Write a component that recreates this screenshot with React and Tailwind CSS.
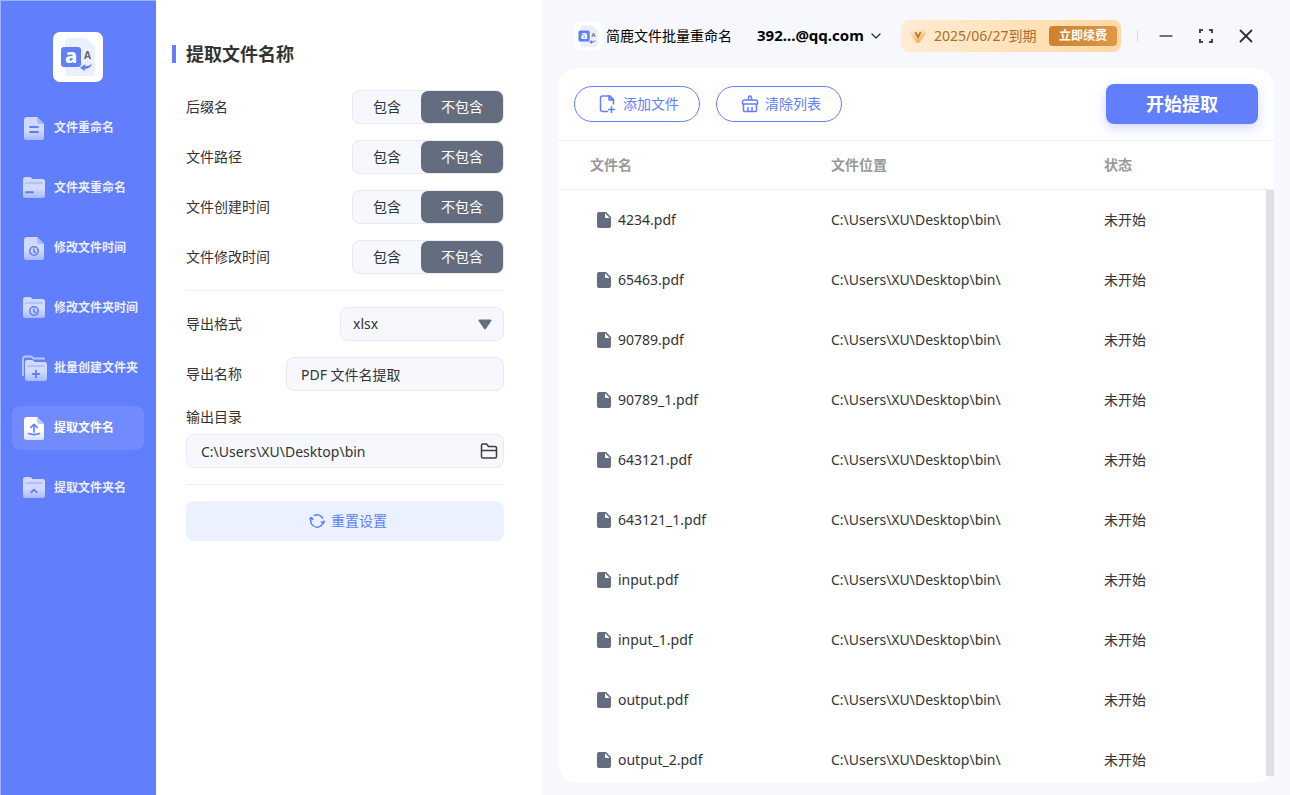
import React, { useState } from 'react';
import { ChevronDown, Minus, X } from 'lucide-react';

const FILES = [
  '4234.pdf', '65463.pdf', '90789.pdf', '90789_1.pdf', '643121.pdf',
  '643121_1.pdf', 'input.pdf', 'input_1.pdf', 'output.pdf', 'output_2.pdf',
];

const NAV = [
  { label: '文件重命名', shape: 'file', mark: 'lines' },
  { label: '文件夹重命名', shape: 'folder', mark: 'dash' },
  { label: '修改文件时间', shape: 'file', mark: 'clock' },
  { label: '修改文件夹时间', shape: 'folder', mark: 'clock' },
  { label: '批量创建文件夹', shape: 'folders', mark: 'plus' },
  { label: '提取文件名', shape: 'file', mark: 'upload' },
  { label: '提取文件夹名', shape: 'folder', mark: 'caret' },
];

const OPTIONS = ['后缀名', '文件路径', '文件创建时间', '文件修改时间'];

const MARKS = {
  lines: <path d="M8 12h8M8 17h8" />,
  dash: <path d="M4 17.3h7" />,
  clock: <g strokeWidth="1.6"><circle cx="12" cy="16" r="4.2" /><path d="M11.8 14v2.4l1.7 1.2" /></g>,
  plus: <path d="M12 12.8v6.4M8.8 16h6.4" />,
  upload: <g strokeWidth="1.6"><path d="M12 17V9.6M8.8 12.4 12 9.3l3.2 3.1M6.5 18.6c3.5 1.3 7.5 1.3 11 0" /></g>,
  caret: <path d="m9.4 17 2.6-2.4 2.6 2.4" />,
};

const FOLDER = 'M1 4.5A2.5 2.5 0 0 1 3.5 2h4.2c.8 0 1.4.3 2 .9l.9 1.1H20.500A2.5 2.5 0 0 1 23 6.500V20.500A2.5 2.5 0 0 1 20.500 23H3.500A2.5 2.5 0 0 1 1 20.500Z';

// Icono del menú lateral: archivo o carpeta con una marca encima
function NavIcon({ shape, mark, active }) {
  const id = `g-${shape}-${mark}`;
  return (
    <svg width="26" height="26" viewBox="0 0 26 26" fill="none" className="shrink-0">
      <defs>
        <linearGradient id={id} x1="0" y1="0" x2="0" y2="1">
          <stop offset="0" stopColor={active ? '#ffffff' : '#cfd8ff'} />
          <stop offset="0.55" stopColor={active ? '#ffffff' : '#d3dbff'} />
          <stop offset="1" stopColor={active ? '#d6deff' : '#a9b9fe'} />
        </linearGradient>
      </defs>
      {shape === 'folders' && (
        <path d="M1 21V4a2.5 2.5 0 0 1 2.5-2.5H9.500l2 2H23" stroke="#bcc8ff" strokeWidth="1.8" />
      )}
      <g transform={shape === 'folders' ? 'translate(2 3)' : undefined}>
        {shape === 'file' ? (
          <>
            <path d="M5 2H15l7 7V22.500A2.5 2.5 0 0 1 19.500 25H4.500A2.5 2.5 0 0 1 2 22.500V5a3 3 0 0 1 3-3Z" fill={`url(#${id})`} />
            <path d="M15 2l7 7H17.500A2.5 2.5 0 0 1 15 6.500Z" fill={active ? '#bcc9ff' : '#a9b9fe'} />
          </>
        ) : (
          <>
            <path d={FOLDER} fill={`url(#${id})`} />
            <path d="M3 9.5c0-1.500.8-2.500 2-2.500H19c1.200 0 2 1 2 2.500-.5-.5-1-.6-2-.6H5c-1 0-1.500.1-2 .6Z" fill="#b3c1ff" />
          </>
        )}
        <g stroke="#617efc" strokeWidth="1.9" strokeLinecap="round" strokeLinejoin="round">{MARKS[mark]}</g>
      </g>
    </svg>
  );
}

function Logo({ className }) {
  return (
    <svg viewBox="0 0 50 50" className={className}>
      <rect width="50" height="50" rx="7" fill="#fff" />
      <path d="M16 6H33l9 9V40a4 4 0 0 1-4 4H16a4 4 0 0 1-4-4V10a4 4 0 0 1 4-4Z" fill="#ebf0ff" />
      <rect x="8" y="15" width="20" height="20" rx="3" fill="#617efc" />
      <text x="18" y="31" textAnchor="middle" fontSize="20" fontWeight="800" fill="#fff">a</text>
      <text x="34.5" y="27" textAnchor="middle" fontSize="10" fontWeight="700" fill="#5c6475">A</text>
      <path d="M39 31.5c-2 2.2-4 2.8-7 2.700l.5-2.200-5.500 3.700 4.600 3.400.2-2.200c4 0 6.400-2 7.200-5.400Z" fill="#617efc" />
    </svg>
  );
}

function FileIcon() {
  return (
    <svg width="14" height="16" viewBox="0 0 14 16" className="shrink-0">
      <path d="M2 0H9L14 5V14a2 2 0 0 1-2 2H2a2 2 0 0 1-2-2V2a2 2 0 0 1 2-2Z" fill="#646d80" />
      <path d="M8 1.300 12.700 6H9a1 1 0 0 1-1-1Z" fill="#fff" />
    </svg>
  );
}

function AddFileIcon() {
  return (
    <svg width="18" height="18" viewBox="0 0 18 18" fill="none" stroke="#617efc" strokeWidth="1.5" strokeLinecap="round" strokeLinejoin="round">
      <path d="M8.500 16.500H3.500A2 2 0 0 1 1.500 14.500V3A2 2 0 0 1 3.500 1h7.500L14.500 4.500V9" />
      <path d="M10 1V5H14.500Z" fill="#617efc" fillOpacity="0.4" />
      <path d="M12.500 11.500v6M9.500 14.500h6" />
    </svg>
  );
}

function CleanIcon() {
  return (
    <svg width="18" height="18" viewBox="0 0 18 18" fill="none" stroke="#617efc" strokeWidth="1.5" strokeLinejoin="round">
      <path d="M7.500 4.500V2.500a1.500 1.500 0 0 1 3 0V4.500M1.500 9V7a2 2 0 0 1 2-2H14.500a2 2 0 0 1 2 2V9ZM2.500 9V15.500a1 1 0 0 0 1 1H14.500a1 1 0 0 0 1-1V9" />
      <path d="M7 12V16.500M11 12V16.500" />
    </svg>
  );
}

function ResetIcon() {
  return (
    <svg width="16" height="16" viewBox="0 0 18 18" fill="none" stroke="#617efc" strokeWidth="1.7" strokeLinecap="round" strokeLinejoin="round">
      <path d="M2.600 5.500A7 7 0 0 0 5.800 15M7.800 15.900A7 7 0 0 0 16 9.500M15.300 6A7 7 0 0 0 6 2.700" />
      <path d="M1 6.500 2.800 5 4.300 7M14 9.800 16 11.800 17.300 9.300" />
    </svg>
  );
}

function FolderIcon() {
  return (
    <svg width="18" height="18" viewBox="0 0 18 18" fill="none" stroke="#3d3d3d" strokeWidth="1.5" strokeLinejoin="round">
      <path d="M1.500 14.500V3.500a1.500 1.500 0 0 1 1.500-1.500H6.500L8.500 4.500H15A1.500 1.500 0 0 1 16.500 6V14.500A1.500 1.500 0 0 1 15 16H3A1.500 1.500 0 0 1 1.500 14.500ZM1.500 8.500h15" />
    </svg>
  );
}

function VipIcon() {
  return (
    <svg width="18" height="16" viewBox="0 0 18 16" className="shrink-0">
      <defs>
        <linearGradient id="vip" x1="0" y1="0" x2="0.3" y2="1">
          <stop offset="0" stopColor="#fff1dc" />
          <stop offset="0.5" stopColor="#fbd49a" />
          <stop offset="1" stopColor="#f2ae56" />
        </linearGradient>
      </defs>
      <path d="M4.500.8h9c.6 0 1 .2 1.400.7l2 3c.5.7.4 1.400-.1 2l-6.600 8c-.7.8-1.700.8-2.400 0l-6.600-8c-.5-.6-.6-1.300-.1-2l2-3c.4-.5.800-.7 1.400-.7Z" fill="url(#vip)" />
      <path d="M5.500 4.300h2L9 7.600l1.500-3.300h2L9 10.800Z" fill="#a8743a" />
    </svg>
  );
}

function Toggle({ label, value, onChange }) {
  const base = 'h-8 text-sm leading-5 rounded-[7px]';
  const on = 'bg-[#646d80] text-white';
  const off = 'text-[#333333]';
  return (
    <div className="flex items-center justify-between">
      <span className="text-sm leading-5">{label}</span>
      <div role="group" aria-label={label} className="flex w-[152px] rounded-lg border border-[#e8eaf0] bg-[#f6f8fd]">
        <button type="button" aria-pressed={value} onClick={() => onChange(true)} className={`${base} flex-1 ${value ? on : off}`}>包含</button>
        <button type="button" aria-pressed={!value} onClick={() => onChange(false)} className={`${base} w-[82px] ${value ? off : on}`}>不包含</button>
      </div>
    </div>
  );
}

const App = () => {
  const [activo, setActivo] = useState(5);
  const [incluye, setIncluye] = useState([false, false, false, false]);
  const [nombre, setNombre] = useState('PDF 文件名提取');
  const [formato, setFormato] = useState('xlsx');
  const [ruta, setRuta] = useState('C:\\Users\\XU\\Desktop\\bin');

  const reset = () => {
    setIncluye([false, false, false, false]);
    setFormato('xlsx');
  };

  return (
    <div className="flex h-screen bg-[#f6f8fd] text-[#333333] font-['Noto_Sans','Noto_Sans_CJK_SC',sans-serif]">
      {/* Menú lateral */}
      <aside className="w-[156px] shrink-0 bg-[#617efc] border-l border-t border-[#a0b1fd] pt-[31px] pl-[11px] pr-3">
        <Logo className="w-[50px] h-[50px] mx-auto" />
        <nav className="mt-6 flex flex-col gap-4">
          {NAV.map((n, i) => (
            <button
              key={n.label}
              type="button"
              onClick={() => setActivo(i)}
              className={`h-11 flex items-center gap-1.5 pl-2.5 rounded-lg text-xs font-bold whitespace-nowrap ${i === activo ? 'bg-[#718bfd] text-white' : 'text-[#eaeeff]'}`}
            >
              <NavIcon shape={n.shape} mark={n.mark} active={i === activo} />
              {n.label}
            </button>
          ))}
        </nav>
      </aside>

      {/* Opciones de extracción */}
      <section className="w-[386px] shrink-0 bg-white pt-10 pl-4 pr-[38px]">
        <h1 className="flex items-center gap-2.5 text-lg leading-7 font-bold">
          <span className="w-1 h-[18px] bg-[#617efc]" />
          提取文件名称
        </h1>
        <div className="ml-3.5 mt-[22px] flex flex-col gap-4">
          {OPTIONS.map((o, i) => (
            <Toggle key={o} label={o} value={incluye[i]} onChange={(v) => setIncluye(incluye.map((x, j) => (j === i ? v : x)))} />
          ))}
          <hr className="border-[#eeeff2]" />
          <div className="flex items-center justify-between">
            <label htmlFor="formato" className="text-sm leading-5">导出格式</label>
            <div className="grid w-[164px]">
              <select id="formato" value={formato} onChange={(e) => setFormato(e.target.value)} className="col-start-1 row-start-1 appearance-none h-[34px] pl-3 rounded-lg border border-[#e8eaf0] bg-[#f6f8fd] text-sm">
                <option>xlsx</option>
                <option>txt</option>
              </select>
              <svg width="14" height="11" viewBox="0 0 14 11" className="col-start-1 row-start-1 self-center justify-self-end mr-3 pointer-events-none">
                <path d="M1.500.5h11c1 0 1.400.9.8 1.600L8 9.800c-.6.8-1.400.8-2 0L.7 2.100C.1 1.400.5.5 1.500.5Z" fill="#646d80" />
              </svg>
            </div>
          </div>
          <div className="flex items-center justify-between">
            <label htmlFor="nombre" className="text-sm leading-5">导出名称</label>
            <input id="nombre" type="text" value={nombre} onChange={(e) => setNombre(e.target.value)} className="w-[218px] h-[34px] px-3.5 rounded-lg border border-[#e8eaf0] bg-[#f6f8fd] text-sm" />
          </div>
          <div>
            <label htmlFor="ruta" className="block text-sm leading-5">输出目录</label>
            <div className="mt-[7px] flex items-center h-[34px] pl-3.5 pr-[5px] rounded-lg border border-[#e8eaf0] bg-[#f6f8fd]">
              <input id="ruta" type="text" value={ruta} onChange={(e) => setRuta(e.target.value)} className="flex-1 min-w-0 h-8 text-sm" />
              <button type="button" aria-label="选择目录"><FolderIcon /></button>
            </div>
          </div>
          <hr className="border-[#eeeff2]" />
          <button type="button" onClick={reset} className="h-10 pl-1.5 flex items-center justify-center gap-1.5 rounded-lg bg-[#ebf1ff] text-[#617efc] text-sm">
            <ResetIcon />
            重置设置
          </button>
        </div>
      </section>

      {/* Contenido principal */}
      <main className="flex-1 min-w-0 flex flex-col px-4 pb-3">
        <header className="h-[68px] shrink-0 flex items-center pt-1 pl-4 text-sm text-black whitespace-nowrap">
          <Logo className="w-7 h-7 mr-1" />
          <span>简鹿文件批量重命名</span>
          <button type="button" className="ml-[25px] flex items-center gap-1 text-[15px] font-bold">
            392...@qq.com
            <ChevronDown size={16} strokeWidth={2} color="#333" />
          </button>
          <div className="ml-auto flex items-center w-[220px] h-8 pl-2 pr-1 rounded-lg bg-linear-to-r from-[#ffecd2] to-[#ffd8a4] text-[#a96f2c]">
            <VipIcon />
            <span className="ml-[7px]">2025/06/27到期</span>
            <button type="button" className="ml-auto h-5 w-[68px] rounded bg-linear-to-r from-[#cc812c] to-[#dd9848] text-white text-xs font-bold">立即续费</button>
          </div>
          <span className="ml-4 w-px h-3 bg-[#d9dbe2]" />
          <button type="button" aria-label="最小化" className="ml-5 w-4 flex justify-center"><Minus size={20} strokeWidth={2} color="#444" className="shrink-0" /></button>
          <button type="button" aria-label="最大化" className="ml-6 w-4">
            <svg width="16" height="16" viewBox="0 0 16 16" fill="none" stroke="#444" strokeWidth="2">
              <path d="M2 5V2H5M11 2h3V5M14 11v3H11M5 14H2V11" />
            </svg>
          </button>
          <button type="button" aria-label="关闭" className="ml-6 mr-5 w-4 flex justify-center"><X size={22} strokeWidth={2} color="#333" className="shrink-0" /></button>
        </header>

        <div className="flex-1 min-h-0 flex flex-col bg-white rounded-[20px]">
          <div className="flex items-center gap-4 h-[73px] shrink-0 px-4 border-b border-[#eeeff2]">
            <button type="button" className="w-[126px] h-9 pl-1 flex items-center justify-center gap-1.5 rounded-full border border-[#617efc] text-[#617efc] text-sm">
              <AddFileIcon />
              添加文件
            </button>
            <button type="button" className="w-[126px] h-9 pl-1 flex items-center justify-center gap-1.5 rounded-full border border-[#617efc] text-[#617efc] text-sm">
              <CleanIcon />
              清除列表
            </button>
            <button type="button" className="ml-auto w-[152px] h-10 rounded-lg bg-[#617efc] text-white text-lg font-bold shadow-[0_4px_12px_rgba(97,126,252,0.3)]">开始提取</button>
          </div>
          <div className="relative flex-1 min-h-0 overflow-hidden">
            <table className="w-full table-fixed border-separate border-spacing-0 text-sm text-left">
              <thead>
                <tr className="h-[49px] text-[#999999]">
                  <th className="w-[273px] pl-8 font-bold border-b border-[#eeeff2]">文件名</th>
                  <th className="w-[273px] font-bold border-b border-[#eeeff2]">文件位置</th>
                  <th className="font-bold border-b border-[#eeeff2]">状态</th>
                </tr>
              </thead>
              <tbody>
                {FILES.map((f) => (
                  <tr key={f} className="h-[60px]">
                    <td className="pl-[39px]">
                      <div className="flex items-center gap-[7px]">
                        <FileIcon />
                        {f}
                      </div>
                    </td>
                    <td>C:\Users\XU\Desktop\bin\</td>
                    <td>未开始</td>
                  </tr>
                ))}
              </tbody>
            </table>
            <div className="absolute right-0 top-[49px] bottom-[7px] w-2 bg-[#dfdfe9]" />
          </div>
        </div>
      </main>
    </div>
  );
};

export default App;
